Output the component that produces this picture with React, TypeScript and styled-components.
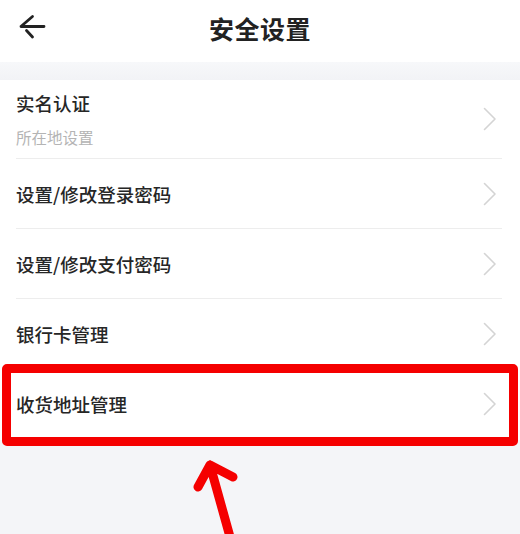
import styled, { createGlobalStyle } from "styled-components";

const GlobalStyle = createGlobalStyle`
  html, body {
    margin: 0;
    padding: 0;
    background: #f4f5f8;
  }
  body {
    font-family: "Noto Sans CJK SC", "Noto Sans", sans-serif;
  }
`;

type Item = {
  title: string;
  sub?: string;
  marked?: boolean;
};

const items: Item[] = [
  { title: "实名认证", sub: "所在地设置" },
  { title: "设置/修改登录密码" },
  { title: "设置/修改支付密码" },
  { title: "银行卡管理" },
  { title: "收货地址管理", marked: true },
];

const App = () => {
  return (
    <Page>
      <GlobalStyle />
      <Header>
        <BackButton>
          <svg width="28" height="28" viewBox="0 0 28 28" fill="none">
            <path
              d="M3 12.5 H26 M3.5 12 L14.5 2.5 M8.5 16.5 L14.5 23"
              stroke="#222"
              strokeWidth="2.8"
              strokeLinecap="round"
            />
          </svg>
        </BackButton>
        <Title>安全设置</Title>
      </Header>
      <Band />
      <List>
        {items.map((item, i) => (
          <RowWrap key={i}>
            <Row $tall={!!item.sub} $last={i === items.length - 1}>
              <Texts>
                <RowTitle>{item.title}</RowTitle>
                {item.sub && <RowSub>{item.sub}</RowSub>}
              </Texts>
              <Chevron />
            </Row>
            {item.marked && <Highlight />}
          </RowWrap>
        ))}
      </List>
      <Pointer />
    </Page>
  );
};

const Chevron = () => (
  <svg width="16" height="26" viewBox="0 0 16 26" fill="none">
    <path
      d="M2.5 2.5 L13 13 L2.5 23.5"
      stroke="#d4d4d4"
      strokeWidth="1.6"
      strokeLinecap="round"
      strokeLinejoin="round"
    />
  </svg>
);

const Pointer = () => (
  <ArrowSvg width="520" height="100" viewBox="0 0 520 100">
    <path
      d="M210 25 L232 104 M210 25 L198 47 M210 25 L233 37"
      stroke="#f50000"
      strokeWidth="9"
      strokeLinecap="round"
      strokeLinejoin="round"
      fill="none"
    />
  </ArrowSvg>
);

const Page = styled.div`
  position: relative;
  width: 520px;
  height: 534px;
  overflow: hidden;
  background: #f4f5f8;
`;

const Header = styled.div`
  position: relative;
  height: 62px;
  background: #fff;
  display: flex;
  align-items: center;
  justify-content: center;
`;

const BackButton = styled.div`
  position: absolute;
  left: 18px;
  top: 14px;
  width: 28px;
  height: 28px;
`;

const Title = styled.div`
  font-size: 25px;
  font-weight: 700;
  color: #222;
  line-height: 34px;
  margin-top: -6px;
  letter-spacing: 0.5px;
`;

const Band = styled.div`
  height: 18px;
  background: linear-gradient(#f7f8fa, #f2f3f6);
`;

const List = styled.div`
  background: #fff;
  height: 360px;
`;

const RowWrap = styled.div`
  position: relative;
`;

const Row = styled.div<{ $tall: boolean; $last: boolean }>`
  height: ${(p) => (p.$tall ? 78 : 69)}px;
  margin: 0 18px 0 16px;
  padding-right: 4px;
  display: flex;
  align-items: center;
  justify-content: space-between;
  border-bottom: 1px solid ${(p) => (p.$last ? "transparent" : "#ededed")};
`;

const Texts = styled.div`
  display: flex;
  flex-direction: column;
  gap: 12px;
`;

const RowTitle = styled.div`
  font-size: 18.5px;
  font-weight: 500;
  color: #262626;
  line-height: 24px;
`;

const RowSub = styled.div`
  font-size: 15.5px;
  color: #b4b4b4;
  line-height: 20px;
`;

const Highlight = styled.div`
  position: absolute;
  left: 2px;
  right: 2px;
  top: -5px;
  bottom: -7px;
  border: 9px solid #f50000;
  border-radius: 5px;
  pointer-events: none;
`;

const ArrowSvg = styled.svg`
  position: absolute;
  left: 0;
  top: 440px;
`;

export default App;
